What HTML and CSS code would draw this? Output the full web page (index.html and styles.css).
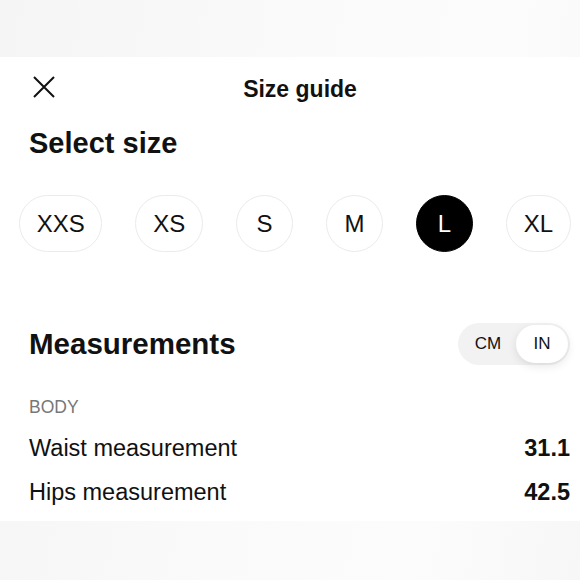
FILE: index.html
```html
<!DOCTYPE html>
<html>
<head>
<meta charset="utf-8">
<link rel="stylesheet" href="styles.css">
</head>
<body>
<div class="backdrop-top"></div>
<main class="sheet">
  <header class="header">
    <button class="close" aria-label="Close">
      <svg width="24" height="24" viewBox="0 0 24 24" fill="none" stroke="#111" stroke-width="2" stroke-linecap="butt">
        <path d="M2 2 L22 22 M22 2 L2 22"/>
      </svg>
    </button>
    <h1 class="title">Size guide</h1>
    <span></span>
  </header>
  <h2 class="section-title">Select size</h2>
  <div class="sizes">
    <button class="size">XXS</button>
    <button class="size">XS</button>
    <button class="size">S</button>
    <button class="size">M</button>
    <button class="size active">L</button>
    <button class="size">XL</button>
  </div>
  <div class="meas-head">
    <h2 class="section-title big">Measurements</h2>
    <div class="toggle">
      <span class="opt">CM</span>
      <span class="opt on">IN</span>
    </div>
  </div>
  <div class="group">BODY</div>
  <div class="row"><span>Waist measurement</span><span class="val">31.1</span></div>
  <div class="row"><span>Hips measurement</span><span class="val">42.5</span></div>
</main>
<div class="backdrop-bottom"></div>
</body>
</html>
```
FILE: styles.css
```css
* { box-sizing: border-box; }
html, body { margin: 0; padding: 0; }
body {
  width: 580px;
  height: 580px;
  overflow: hidden;
  font-family: "Liberation Sans", Arial, sans-serif;
  color: #111;
  background: linear-gradient(100deg, #f5f5f5 0%, #fafafa 45%, #fcfcfc 75%, #f7f7f7 100%);
}
.backdrop-top { height: 57px; }
.sheet {
  background: #fff;
  height: 464px;
  padding: 0 9px 0 29px;
  display: flex;
  flex-direction: column;
}
.header {
  height: 60px;
  display: grid;
  grid-template-columns: 1fr auto 1fr;
  align-items: center;
}
.close {
  border: 0;
  background: none;
  padding: 0;
  margin-left: 3px;
  width: 24px;
  height: 24px;
  display: flex;
  justify-self: start;
}
.title {
  margin: 0;
  font-size: 23px;
  font-weight: 700;
  line-height: 28px;
  transform: translateY(2px);
}
.section-title {
  margin: 9px 0 0;
  font-size: 29px;
  font-weight: 700;
  line-height: 34px;
}
.sizes {
  margin: 35px 0 0 -10px;
  display: flex;
  gap: 33px;
}
.size {
  height: 57px;
  min-width: 57px;
  padding: 0 17px;
  border: 1px solid #ebebeb;
  border-radius: 29px;
  background: #fff;
  font-family: inherit;
  font-size: 24px;
  color: #111;
  display: flex;
  align-items: center;
  justify-content: center;
}
.size.active {
  background: #000;
  border-color: #000;
  color: #fff;
}
.meas-head {
  margin-top: 71px;
  display: flex;
  align-items: center;
  justify-content: space-between;
}
.meas-head .big { margin: 0; font-size: 29.5px; }
.toggle {
  width: 112px;
  height: 42px;
  border-radius: 21px;
  background: #f2f2f2;
  padding: 2px;
  display: flex;
  align-items: center;
  margin-right: 1px;
}
.opt {
  flex: 1;
  height: 38px;
  border-radius: 19px;
  display: flex;
  align-items: center;
  justify-content: center;
  font-size: 17px;
  color: #111;
}
.opt.on {
  flex: 0 0 52px;
  background: #fff;
  box-shadow: 0 3px 10px rgba(0,0,0,0.10);
}
.group {
  margin-top: 30px;
  font-size: 17.5px;
  line-height: 24px;
  color: #777;
}
.row {
  margin-top: 7px;
  height: 44px;
  display: flex;
  align-items: center;
  justify-content: space-between;
  font-size: 23.5px;
}
.row + .row { margin-top: 0; }
.val { font-weight: 700; margin-right: 1px; }
.backdrop-bottom { height: 59px; }
```
